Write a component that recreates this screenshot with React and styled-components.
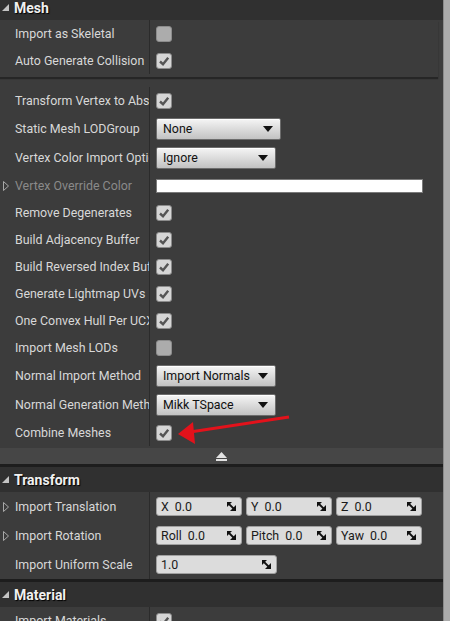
import React from 'react'
import styled, { createGlobalStyle } from 'styled-components'

const GlobalStyle = createGlobalStyle`
  html, body { margin: 0; padding: 0; background: #3c3c3c; }
  body { font-family: Roboto, "Noto Sans", "Liberation Sans", sans-serif; }
`

const Window = styled.div`
  position: relative;
  width: 450px;
  height: 621px;
  display: flex;
  overflow: hidden;
  background: #3c3c3c;
`

// scrolled a little, so the first category's top is cut
const Details = styled.div`
  flex: 1;
  min-width: 0;
  display: flex;
  flex-direction: column;
  margin-top: -8px;
`

const Scrollbar = styled.div`
  width: 6px;
  flex: none;
  background: #ababab;
  border-left: 1px solid #8a8a8a;
`

const Category = styled.section`
  border-top: 3px solid #1d1d1d;
`

const CategoryHeader = styled.div`
  height: 25px;
  display: flex;
  align-items: center;
  gap: 5px;
  padding-left: 2px;
  background: #303030;
  color: #f0f0f0;
  font-size: 14px;
  font-weight: bold;
  text-shadow: 1px 1px 1px #000;
`

const Group = styled.div`
  padding-bottom: ${p => p.$pad}px;
  margin: ${p => (p.$shadow ? '0 5px 10px 0' : '0')};
  box-shadow: ${p => (p.$shadow ? '0 2px 1px #262626' : 'none')};
`

const Row = styled.div`
  display: flex;
  height: ${p => p.$h || 27}px;
`

const NameCell = styled.div`
  width: 150px;
  flex: none;
  box-sizing: border-box;
  display: flex;
  align-items: center;
  padding-left: 3px;
  border-right: 1px solid #2b2b2b;
  overflow: hidden;
  white-space: nowrap;
  color: ${p => (p.$dim ? '#8a8a8a' : '#d8d8d8')};
  font-size: 12.4px;
`

const Expander = styled.span`
  width: 12px;
  flex: none;
  display: flex;
  align-items: center;
`

const ValueCell = styled.div`
  flex: 1;
  display: flex;
  align-items: center;
  gap: 4px;
  padding-left: 6px;
`

const Check = styled.span`
  width: 16px;
  height: 16px;
  box-sizing: border-box;
  display: flex;
  align-items: center;
  justify-content: center;
  border: 1px solid #8c8c8c;
  border-radius: 3px;
  background: ${p => (p.$on ? '#d6d6d6' : '#acacac')};
`

const Combo = styled.div`
  width: ${p => p.$w}px;
  height: 22px;
  box-sizing: border-box;
  display: flex;
  align-items: center;
  justify-content: space-between;
  padding: 0 7px 0 6px;
  border: 1px solid #6c6c6c;
  border-radius: 2px;
  background: linear-gradient(#f5f5f5, #c2c2c2);
  box-shadow: inset 0 1px 0 #fff;
  color: #111;
  font-size: 12.4px;
  white-space: nowrap;
`

const ColorBlock = styled.div`
  width: 267px;
  height: 14px;
  box-sizing: border-box;
  background: #fff;
  border: 1px solid #7a7a7a;
`

const NumBox = styled.div`
  width: ${p => p.$w}px;
  height: 19px;
  box-sizing: border-box;
  display: flex;
  align-items: center;
  justify-content: space-between;
  padding: 0 5px 0 4px;
  border: 1px solid #a0a0a0;
  border-radius: 3px;
  background: #dcdcdc;
  color: #1a1a1a;
  font-size: 12.4px;
`

const NumText = styled.span`
  display: flex;
  gap: 6px;
`

const AdvancedBar = styled.div`
  height: 16px;
  display: flex;
  align-items: center;
  justify-content: center;
  background: #464646;
`

const Annotation = styled.svg`
  position: absolute;
  left: 0;
  top: 0;
  pointer-events: none;
`

const CollapseIcon = () => (
  <svg width="7" height="7" viewBox="0 0 7 7"><polygon points="7,0 7,7 0,7" fill="#c4c4c4" /></svg>
)

const ExpandIcon = () => (
  <svg width="6" height="10" viewBox="0 0 6 10"><polygon points="0.5,0.5 5.5,5 0.5,9.5" fill="none" stroke="#a8a8a8" /></svg>
)

const Tick = () => (
  <svg width="12" height="12" viewBox="0 0 12 12">
    <path d="M2 6.5 L5 9.2 L10.2 2.8" fill="none" stroke="#555" strokeWidth="2.4" />
  </svg>
)

const ComboArrow = () => (
  <svg width="10" height="6" viewBox="0 0 10 6"><polygon points="0,0 10,0 5,6" fill="#111" /></svg>
)

const SpinIcon = () => (
  <svg width="9" height="9" viewBox="0 0 9 9">
    <polygon points="0,0 5,0 0,5" fill="#111" />
    <polygon points="9,9 9,3 3,9" fill="#111" />
    <line x1="1" y1="1" x2="8" y2="8" stroke="#111" strokeWidth="1.8" />
  </svg>
)

const EjectIcon = () => (
  <svg width="11" height="9" viewBox="0 0 11 9">
    <polygon points="0,6 5.5,0 11,6" fill="#e2e2e2" />
    <rect x="0" y="7" width="11" height="2" fill="#e2e2e2" />
  </svg>
)

const Prop = ({ name, h, dim, expand, children }) => (
  <Row $h={h}>
    <NameCell $dim={dim}>
      <Expander>{expand && <ExpandIcon />}</Expander>
      {name}
    </NameCell>
    <ValueCell>{children}</ValueCell>
  </Row>
)

const CheckProp = ({ name, on = true }) => (
  <Prop name={name}>
    <Check $on={on}>{on && <Tick />}</Check>
  </Prop>
)

const ComboProp = ({ name, value, w = 120 }) => (
  <Prop name={name} h={29}>
    <Combo $w={w}>{value}<ComboArrow /></Combo>
  </Prop>
)

const Num = ({ label, value, w = 86 }) => (
  <NumBox $w={w}>
    <NumText>{label && <span>{label}</span>}<span>{value}</span></NumText>
    <SpinIcon />
  </NumBox>
)

export default function App() {
  return (
    <Window>
      <GlobalStyle />
      <Details>
        <Category>
          <CategoryHeader><CollapseIcon />Mesh</CategoryHeader>
          <Group $shadow $pad={3}>
            <CheckProp name="Import as Skeletal" on={false} />
            <CheckProp name="Auto Generate Collision" />
          </Group>
          <Group $pad={2}>
            <CheckProp name="Transform Vertex to Absolute" />
            <ComboProp name="Static Mesh LODGroup" value="None" w={125} />
            <ComboProp name="Vertex Color Import Option" value="Ignore" />
            <Prop name="Vertex Override Color" dim expand>
              <ColorBlock />
            </Prop>
            <CheckProp name="Remove Degenerates" />
            <CheckProp name="Build Adjacency Buffer" />
            <CheckProp name="Build Reversed Index Buffer" />
            <CheckProp name="Generate Lightmap UVs" />
            <CheckProp name="One Convex Hull Per UCX" />
            <CheckProp name="Import Mesh LODs" on={false} />
            <ComboProp name="Normal Import Method" value="Import Normals" />
            <ComboProp name="Normal Generation Method" value="Mikk TSpace" />
            <CheckProp name="Combine Meshes" />
          </Group>
          <AdvancedBar><EjectIcon /></AdvancedBar>
        </Category>
        <Category>
          <CategoryHeader><CollapseIcon />Transform</CategoryHeader>
          <Prop name="Import Translation" h={29} expand>
            <Num label="X" value="0.0" />
            <Num label="Y" value="0.0" />
            <Num label="Z" value="0.0" />
          </Prop>
          <Prop name="Import Rotation" h={29} expand>
            <Num label="Roll" value="0.0" />
            <Num label="Pitch" value="0.0" />
            <Num label="Yaw" value="0.0" />
          </Prop>
          <Prop name="Import Uniform Scale" h={29}>
            <Num value="1.0" w={121} />
          </Prop>
        </Category>
        <Category>
          <CategoryHeader><CollapseIcon />Material</CategoryHeader>
          <CheckProp name="Import Materials" />
        </Category>
      </Details>
      <Scrollbar />
      <Annotation width="450" height="621">
        <line x1="289" y1="417" x2="190" y2="432" stroke="#e3121b" strokeWidth="3" />
        <polygon points="178,434 193,422 195,444" fill="#e3121b" />
      </Annotation>
    </Window>
  )
}
